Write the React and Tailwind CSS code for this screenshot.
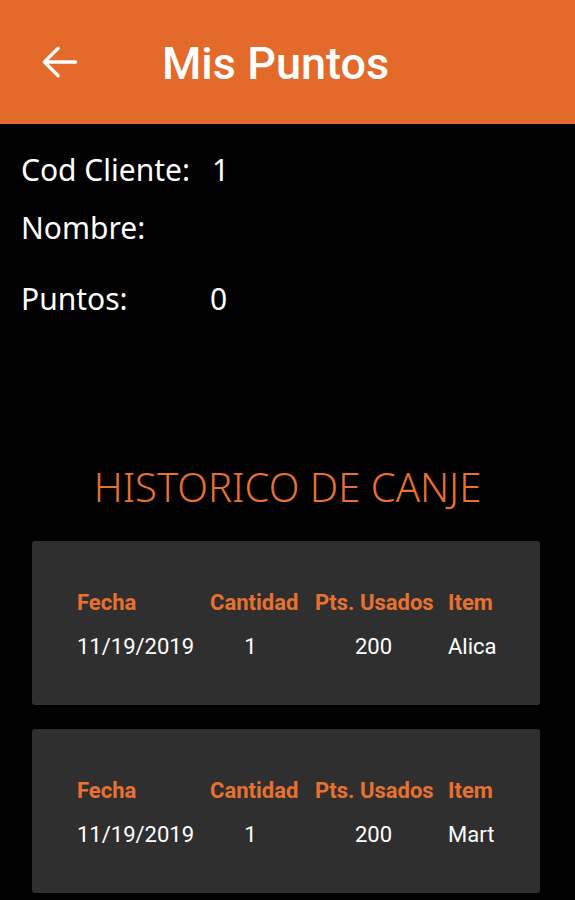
import React from "react";

const rows = [
  { fecha: "11/19/2019", cantidad: "1", pts: "200", item: "Alica" },
  { fecha: "11/19/2019", cantidad: "1", pts: "200", item: "Mart" },
];

const HistoryCard = ({ fecha, cantidad, pts, item }) => (
  <div className="bg-[#2f2f2f] rounded-[3px] h-[164px] pl-[45px] pt-[49px] font-['Roboto',sans-serif] text-[22px]">
    <div className="grid grid-cols-[133px_105px_133px_1fr] font-bold text-[#e8712f] leading-[26px]">
      <span>Fecha</span>
      <span>Cantidad</span>
      <span>Pts. Usados</span>
      <span>Item</span>
    </div>
    <div className="grid grid-cols-[133px_105px_133px_1fr] text-white leading-[26px] mt-[18px]">
      <span>{fecha}</span>
      <span className="text-center pr-[24px]">{cantidad}</span>
      <span className="text-center pr-[16px]">{pts}</span>
      <span>{item}</span>
    </div>
  </div>
);

const App = () => {
  return (
    <div className="w-[575px] h-[900px] bg-black overflow-hidden">
      <header className="h-[124px] bg-[#e36a2a] flex items-center">
        <button className="ml-[38px] w-[44px] h-[44px] flex items-center justify-center text-white">
          <svg
            xmlns="http://www.w3.org/2000/svg"
            className="w-[44px] h-[44px]"
            viewBox="0 0 24 24"
            fill="none"
            stroke="currentColor"
            strokeWidth="1.8"
            strokeLinecap="round"
            strokeLinejoin="round"
          >
            <path d="M20.5 12H3.5M11 4.5L3.5 12l7.5 7.5" />
          </svg>
        </button>
        <h1 className="ml-[80px] mt-[2px] text-white font-['Roboto',sans-serif] font-medium text-[45px] leading-none">
          Mis Puntos
        </h1>
      </header>

      <section className="px-[21px] pt-[27px] text-white font-['Noto_Sans',sans-serif] text-[30px] leading-[38px]">
        <div className="flex">
          <span className="w-[191px]">Cod Cliente:</span>
          <span>1</span>
        </div>
        <div className="flex mt-[20px]">
          <span className="w-[191px]">Nombre:</span>
          <span></span>
        </div>
        <div className="flex mt-[33px]">
          <span className="w-[189px]">Puntos:</span>
          <span>0</span>
        </div>
      </section>

      <h2 className="mt-[145px] text-center text-[#e8712f] font-['Noto_Sans',sans-serif] font-light text-[40px] leading-[48px]">
        HISTORICO DE CANJE
      </h2>

      <div className="mx-[32px] mt-[30px] flex flex-col gap-[24px] w-[508px]">
        {rows.map((r, i) => (
          <HistoryCard key={i} {...r} />
        ))}
      </div>
    </div>
  );
};

export default App;
